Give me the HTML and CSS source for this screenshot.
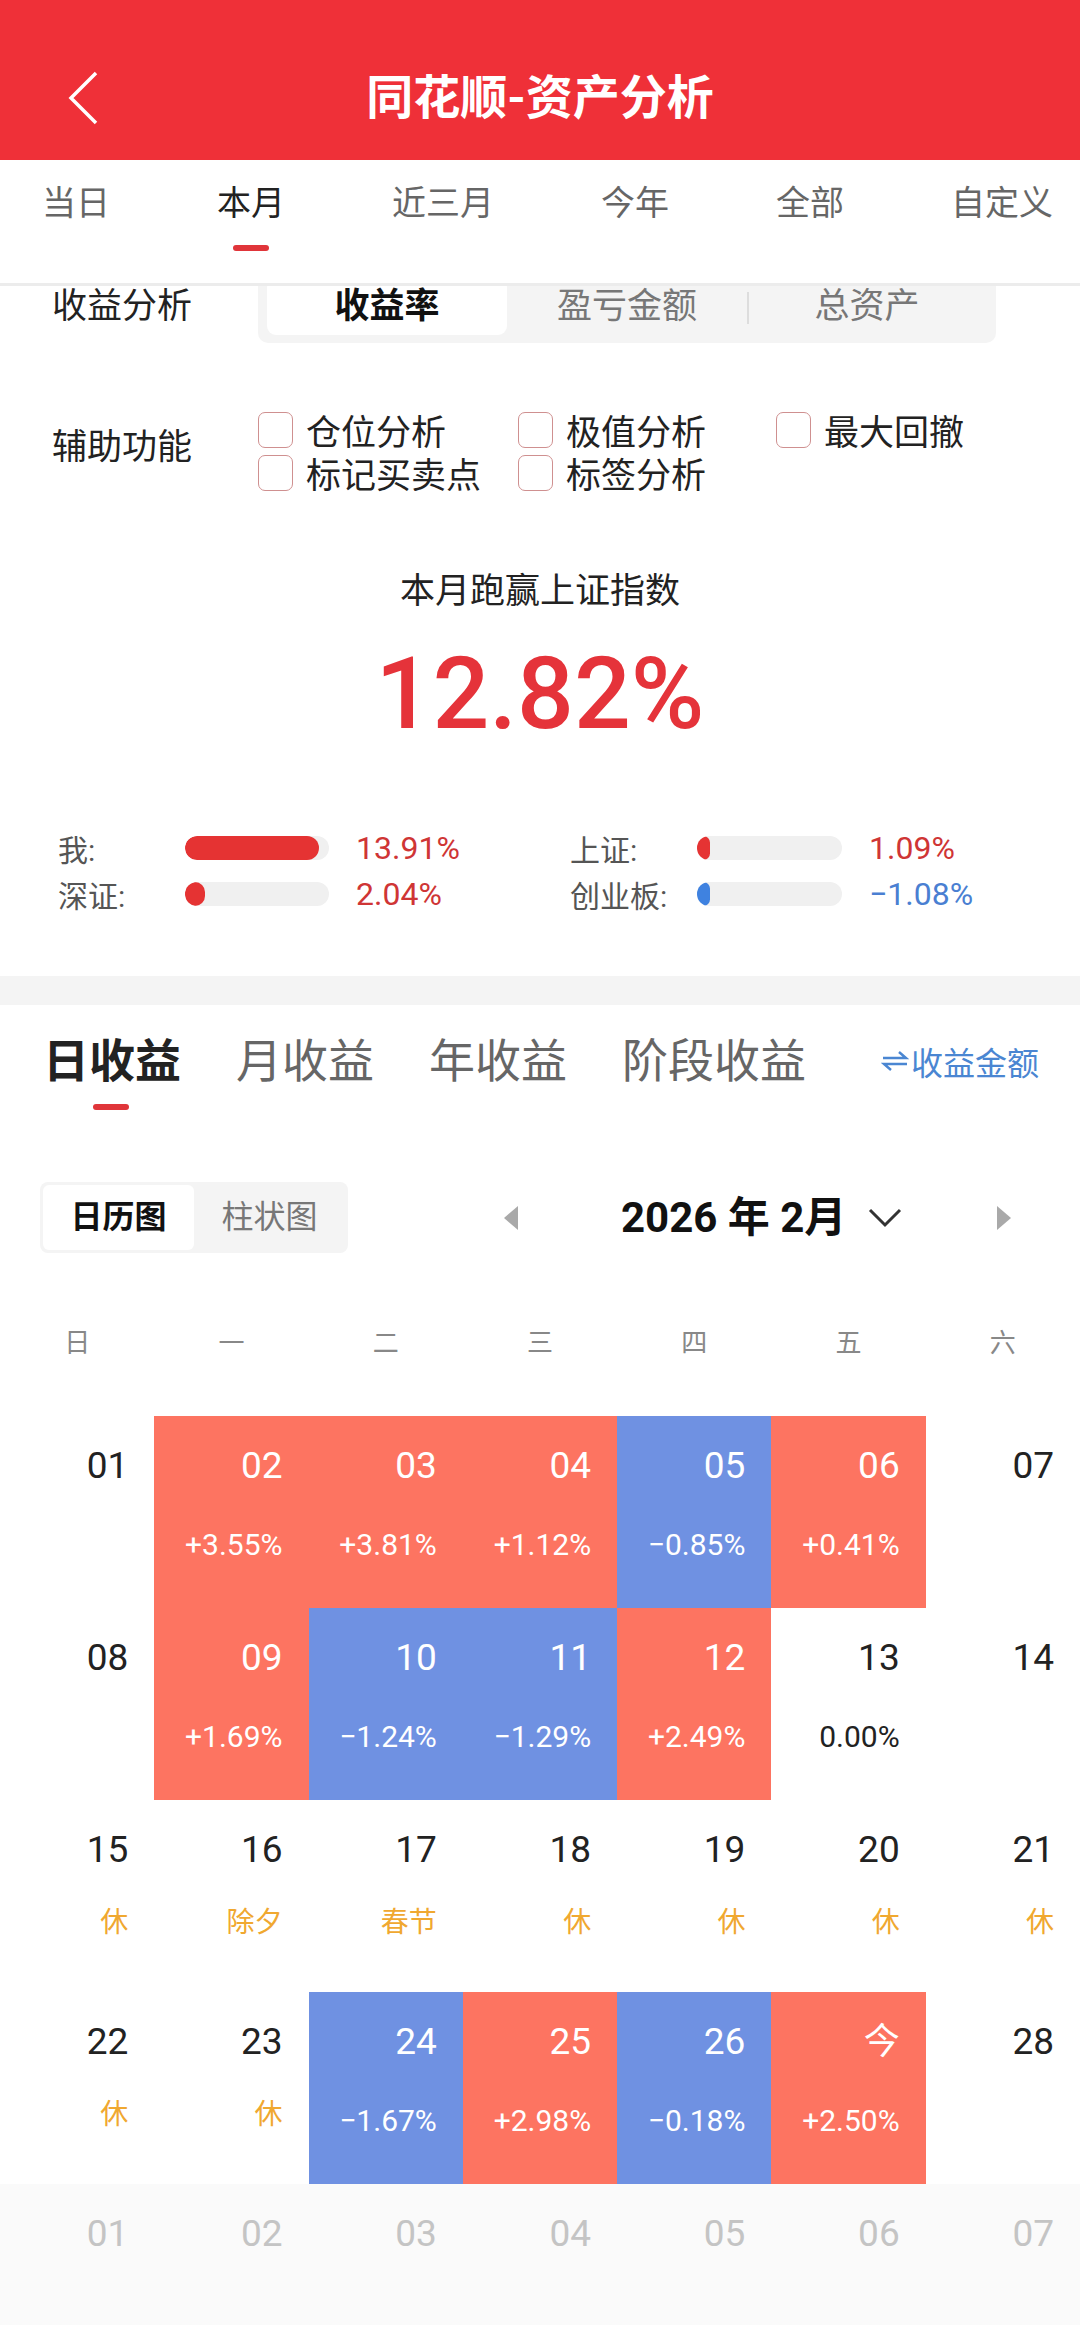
FILE: index.html
```html
<!DOCTYPE html>
<html>
<head>
    <meta charset="utf-8">
    <title>同花顺-资产分析</title>
    <link rel="stylesheet" href="styles.css">
</head>
<body>
    <header class="topbar">
        <a class="back" href="#">
            <svg width="32" height="54" viewBox="0 0 32 54"><polyline points="28,2 3,27 28,52" fill="none" stroke="#fff" stroke-width="3.5"/></svg>
        </a>
        <h1>同花顺-资产分析</h1>
        <span></span>
    </header>

    <nav class="period-tabs">
        <span>当日</span>
        <span class="active">本月</span>
        <span>近三月</span>
        <span>今年</span>
        <span>全部</span>
        <span>自定义</span>
    </nav>

    <div class="scroll-area">
        <section class="analysis">
            <div class="metric-row">
                <span class="row-label">收益分析</span>
                <div class="segmented">
                    <span class="active">收益率</span>
                    <span>盈亏金额</span>
                    <span class="divided">总资产</span>
                </div>
            </div>

            <div class="aux-row">
                <span class="row-label aux-label">辅助功能</span>
                <div class="checks">
                    <label class="check"><i></i>仓位分析</label>
                    <label class="check"><i></i>极值分析</label>
                    <label class="check"><i></i>最大回撤</label>
                    <label class="check"><i></i>标记买卖点</label>
                    <label class="check"><i></i>标签分析</label>
                </div>
            </div>

            <p class="beat-title">本月跑赢上证指数</p>
            <p class="beat-value">12.82%</p>

            <div class="bars">
                <span class="bar-label">我:</span>
                <span class="bar"><b class="fill red" style="width: 93%"></b></span>
                <span class="pct red-text">13.91%</span>
                <span class="bar-label">上证:</span>
                <span class="bar"><b class="fill red" style="width: 9%"></b></span>
                <span class="pct red-text">1.09%</span>

                <span class="bar-label">深证:</span>
                <span class="bar"><b class="fill red" style="width: 14%"></b></span>
                <span class="pct red-text">2.04%</span>
                <span class="bar-label">创业板:</span>
                <span class="bar"><b class="fill blue" style="width: 9%"></b></span>
                <span class="pct blue-text">−1.08%</span>
            </div>
        </section>

        <div class="gap-band"></div>

        <section class="income">
            <div class="income-tabs">
                <span class="active">日收益</span>
                <span>月收益</span>
                <span>年收益</span>
                <span>阶段收益</span>
                <a class="switch" href="#">
                    <svg width="28" height="22" viewBox="0 0 28 22"><path d="M2 8 H25 L18 2 M26 14 H3 L10 20" fill="none" stroke="#4a86d2" stroke-width="2.5"/></svg>收益金额
                </a>
            </div>
            <div class="income-underline"></div>

            <div class="tool-row">
                <div class="view-toggle">
                    <span class="active">日历图</span>
                    <span>柱状图</span>
                </div>
                <div class="month-nav">
                    <svg class="arrow" width="16" height="24" viewBox="0 0 16 24"><polygon points="15,0 15,24 1,12" fill="#a9a9a9"/></svg>
                    <span class="month-title">2026 年 2月</span>
                    <svg class="chevron" width="34" height="20" viewBox="0 0 34 20"><polyline points="2,2 17,17 32,2" fill="none" stroke="#333" stroke-width="3"/></svg>
                    <svg class="arrow next" width="16" height="24" viewBox="0 0 16 24"><polygon points="1,0 1,24 15,12" fill="#a9a9a9"/></svg>
                </div>
            </div>

            <div class="weekdays">
                <span>日</span><span>一</span><span>二</span><span>三</span><span>四</span><span>五</span><span>六</span>
            </div>

            <div class="calendar">
                <div class="day"><span class="num">01</span></div>
                <div class="day up"><span class="num">02</span><span class="sub">+3.55%</span></div>
                <div class="day up"><span class="num">03</span><span class="sub">+3.81%</span></div>
                <div class="day up"><span class="num">04</span><span class="sub">+1.12%</span></div>
                <div class="day down"><span class="num">05</span><span class="sub">−0.85%</span></div>
                <div class="day up"><span class="num">06</span><span class="sub">+0.41%</span></div>
                <div class="day"><span class="num">07</span></div>

                <div class="day"><span class="num">08</span></div>
                <div class="day up"><span class="num">09</span><span class="sub">+1.69%</span></div>
                <div class="day down"><span class="num">10</span><span class="sub">−1.24%</span></div>
                <div class="day down"><span class="num">11</span><span class="sub">−1.29%</span></div>
                <div class="day up"><span class="num">12</span><span class="sub">+2.49%</span></div>
                <div class="day"><span class="num">13</span><span class="sub">0.00%</span></div>
                <div class="day"><span class="num">14</span></div>

                <div class="day"><span class="num">15</span><span class="sub holiday">休</span></div>
                <div class="day"><span class="num">16</span><span class="sub holiday">除夕</span></div>
                <div class="day"><span class="num">17</span><span class="sub holiday">春节</span></div>
                <div class="day"><span class="num">18</span><span class="sub holiday">休</span></div>
                <div class="day"><span class="num">19</span><span class="sub holiday">休</span></div>
                <div class="day"><span class="num">20</span><span class="sub holiday">休</span></div>
                <div class="day"><span class="num">21</span><span class="sub holiday">休</span></div>

                <div class="day"><span class="num">22</span><span class="sub holiday">休</span></div>
                <div class="day"><span class="num">23</span><span class="sub holiday">休</span></div>
                <div class="day down"><span class="num">24</span><span class="sub">−1.67%</span></div>
                <div class="day up"><span class="num">25</span><span class="sub">+2.98%</span></div>
                <div class="day down"><span class="num">26</span><span class="sub">−0.18%</span></div>
                <div class="day up"><span class="num today">今</span><span class="sub">+2.50%</span></div>
                <div class="day"><span class="num">28</span></div>

                <div class="day next"><span class="num">01</span></div>
                <div class="day next"><span class="num">02</span></div>
                <div class="day next"><span class="num">03</span></div>
                <div class="day next"><span class="num">04</span></div>
                <div class="day next"><span class="num">05</span></div>
                <div class="day next"><span class="num">06</span></div>
                <div class="day next"><span class="num">07</span></div>
            </div>
        </section>
    </div>
</body>
</html>
```

FILE: styles.css
```css
html, body {
    margin: 0;
    padding: 0;
    width: 1080px;
    height: 2325px;
    overflow: hidden;
}
body {
    font-family: Roboto, "Noto Sans CJK SC", sans-serif;
    color: #222;
    background-color: #fff;
}
p {
    margin: 0;
}

/* top bar */
.topbar {
    height: 160px;
    box-sizing: border-box;
    padding-top: 36px;
    background-color: #ef3038;
    display: grid;
    grid-template-columns: 1fr auto 1fr;
    align-items: center;
}
.back {
    display: flex;
    padding-left: 68px;
}
.topbar h1 {
    margin: 0;
    color: #fff;
    font-size: 47px;
    font-weight: 700;
    line-height: 124px;
}

/* period tabs */
.period-tabs {
    height: 123px;
    border-bottom: 3px solid #ececec;
    display: flex;
    gap: 107px;
    padding-left: 42px;
    white-space: nowrap;
    overflow: hidden;
}
.period-tabs span {
    position: relative;
    font-size: 34px;
    line-height: 40px;
    padding-top: 23px;
    color: #666;
}
.period-tabs span.active {
    color: #222;
}
.period-tabs span.active::after {
    content: "";
    position: absolute;
    left: 50%;
    top: 85px;
    width: 36px;
    height: 6px;
    margin-left: -18px;
    border-radius: 3px;
    background-color: #e0353a;
}

.scroll-area {
    overflow: hidden;
}

/* analysis block */
.analysis {
    padding: 0 0 59px 0;
}
.metric-row {
    display: flex;
    align-items: center;
    margin-top: -15px;
}
.row-label {
    flex: none;
    width: 258px;
    padding-left: 52px;
    box-sizing: border-box;
    font-size: 35px;
    line-height: 44px;
    color: #222;
}
.segmented {
    display: flex;
    padding: 8px 9px;
    background-color: #f4f4f4;
    border-radius: 10px;
}
.segmented span {
    width: 240px;
    height: 56px;
    line-height: 56px;
    text-align: center;
    font-size: 35px;
    color: #777;
    position: relative;
}
.segmented span.active {
    background-color: #fff;
    border-radius: 9px;
    color: #111;
    font-weight: 700;
}
.segmented span.divided::before {
    content: "";
    position: absolute;
    left: 0;
    top: 13px;
    width: 2px;
    height: 32px;
    background-color: #ddd;
}

.aux-row {
    display: flex;
    margin-top: 65px;
}
.aux-label {
    margin-top: 18px;
    line-height: 43px;
}
.checks {
    display: grid;
    grid-template-columns: 260px 258px 260px;
    grid-auto-rows: 43px;
}
.check {
    display: flex;
    align-items: center;
    gap: 13px;
    font-size: 35px;
    color: #222;
}
.check i {
    width: 35px;
    height: 36px;
    box-sizing: border-box;
    border: 1.5px solid #cf9090;
    border-radius: 7px;
}

.beat-title {
    margin-top: 73px;
    text-align: center;
    font-size: 35px;
    line-height: 50px;
    color: #222;
}
.beat-value {
    margin-top: 27px;
    text-align: center;
    font-size: 100px;
    line-height: 100px;
    font-weight: 500;
    color: #e5333a;
}

.bars {
    margin-top: 81px;
    padding-left: 58px;
    display: grid;
    grid-template-columns: 127px 144px 241px 127px 145px auto;
    grid-auto-rows: 46px;
    align-items: center;
}
.bar-label {
    font-size: 30px;
    color: #555;
}
.bar {
    display: block;
    height: 24px;
    border-radius: 12px;
    background-color: #f0f0f0;
    overflow: hidden;
}
.fill {
    display: block;
    height: 100%;
    border-radius: 12px;
}
.fill.red {
    background-color: #e53333;
}
.fill.blue {
    background-color: #3f82e0;
}
.pct {
    padding-left: 27px;
    font-size: 32px;
}
.red-text {
    color: #cf3535;
}
.blue-text {
    color: #4a7fd2;
}

.gap-band {
    height: 29px;
    background-color: #f4f4f4;
}

/* income block */
.income {
    padding-top: 26px;
}
.income-tabs {
    display: flex;
    align-items: center;
    gap: 55px;
    padding-left: 43px;
    padding-right: 41px;
}
.income-tabs span {
    font-size: 46px;
    line-height: 60px;
    color: #666;
}
.income-tabs span.active {
    color: #222;
    font-weight: 700;
}
.switch {
    margin-left: auto;
    display: flex;
    align-items: center;
    gap: 2px;
    font-size: 32px;
    color: #4a86d2;
    text-decoration: none;
}
.income-underline {
    width: 36px;
    height: 6px;
    margin: 13px 0 0 93px;
    border-radius: 3px;
    background-color: #e0353a;
}

.tool-row {
    display: flex;
    align-items: center;
    margin-top: 72px;
    padding-left: 40px;
}
.view-toggle {
    display: flex;
    padding: 3px;
    background-color: #f4f4f4;
    border-radius: 8px;
}
.view-toggle span {
    width: 151px;
    height: 65px;
    line-height: 65px;
    text-align: center;
    font-size: 32px;
    color: #777;
}
.view-toggle span.active {
    background-color: #fff;
    border-radius: 6px;
    color: #111;
    font-weight: 700;
}
.month-nav {
    display: flex;
    align-items: center;
    margin-left: 155px;
}
.month-title {
    margin-left: 102px;
    font-size: 42px;
    font-weight: 700;
    color: #111;
    line-height: 50px;
}
.chevron {
    margin-left: 22px;
}
.arrow.next {
    margin-left: 94px;
}

.weekdays {
    display: grid;
    grid-template-columns: repeat(7, 1fr);
    margin: 70px 0 53px;
}
.weekdays span {
    text-align: center;
    font-size: 26px;
    line-height: 40px;
    color: #888;
}

.calendar {
    display: grid;
    grid-template-columns: repeat(7, 1fr);
    grid-auto-rows: 192px;
}
.day {
    display: flex;
    flex-direction: column;
    align-items: flex-end;
    padding: 28px 26px 0 0;
}
.day .num {
    font-size: 37px;
    line-height: 44px;
    color: #222;
}
.day .sub {
    margin-top: 40px;
    font-size: 30px;
    line-height: 34px;
    color: #222;
}
.day .holiday {
    margin-top: 34px;
    font-size: 28px;
    color: #f0a830;
}
.day.up {
    background-color: #fd7461;
}
.day.down {
    background-color: #6f91e2;
}
.day.up .num,
.day.up .sub,
.day.down .num,
.day.down .sub {
    color: #fff;
}
.day .today {
    font-size: 36px;
}
.day.next {
    background-color: #fafafa;
}
.day.next .num {
    color: #c4c4c4;
}
```
